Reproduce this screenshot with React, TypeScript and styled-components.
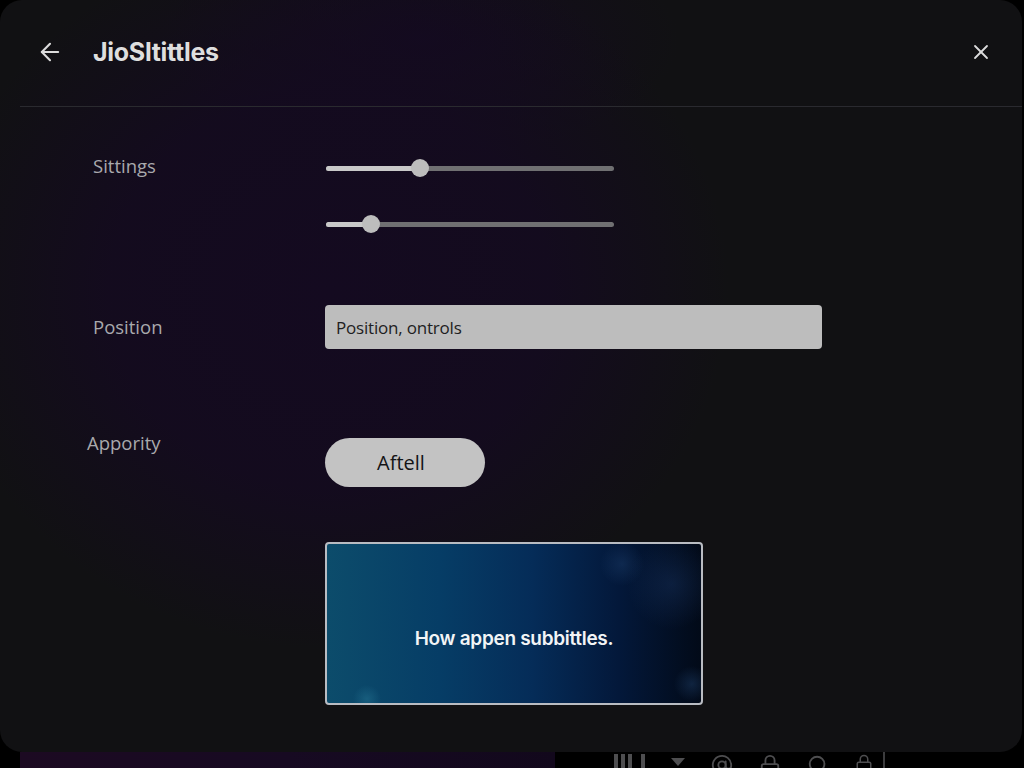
import { FC } from 'react';
import styled, { createGlobalStyle } from 'styled-components';
import { ArrowLeft, X, Search, AtSign, Lock } from 'lucide-react';

const GlobalStyle = createGlobalStyle`
  html, body {
    margin: 0;
    padding: 0;
    background: #000;
  }

  body {
    font-family: 'Open Sans', 'Noto Sans', sans-serif;
    -webkit-font-smoothing: antialiased;
  }
`;

const Screen = styled.div`
  width: 1024px;
  height: 768px;
  display: flex;
  flex-direction: column;
  overflow: hidden;
  background: #000;
`;

const Panel = styled.div`
  height: 752px;
  width: 1022px;
  flex-shrink: 0;
  display: flex;
  flex-direction: column;
  border-radius: 22px;
  background:
    radial-gradient(ellipse 400px 360px at 330px 290px, rgba(20, 10, 32, 1) 0%, rgba(20, 10, 32, 0.85) 55%, rgba(20, 10, 32, 0) 100%),
    radial-gradient(ellipse 260px 120px at 420px 40px, rgba(20, 10, 32, 0.9), rgba(20, 10, 32, 0)),
    #111113;
`;

const Header = styled.header`
  box-sizing: border-box;
  height: 107px;
  display: flex;
  align-items: center;
  margin-left: 20px;
  padding: 0 29px 2px 16px;
  border-bottom: 1px solid #2a2a2f;
`;

const IconButton = styled.button`
  display: flex;
  align-items: center;
  justify-content: center;
  padding: 0;
  border: none;
  background: none;
  color: #dcdcdc;
  cursor: pointer;
`;

const Title = styled.h1`
  margin: 0 0 0 29px;
  flex: 1;
  font-family: 'Inter', 'Open Sans', sans-serif;
  font-size: 25px;
  font-weight: 700;
  letter-spacing: -0.3px;
  color: #dedede;
`;

const Body = styled.div`
  display: grid;
  grid-template-columns: 232px 1fr;
  padding: 52px 0 0 93px;
`;

type TLabel = {
  shift?: number;
};
const Label = styled.div<TLabel>`
  font-size: 18.5px;
  color: #a9a9ad;
  margin-left: ${({ shift }) => shift ?? 0}px;
`;

type TCell = {
  gap?: number;
  bottom?: number;
};
const Cell = styled.div<TCell>`
  display: flex;
  flex-direction: column;
  align-items: flex-start;
  gap: ${({ gap }) => gap ?? 0}px;
  margin-bottom: ${({ bottom }) => bottom ?? 0}px;
`;

const SliderRow = styled.div`
  position: relative;
  width: 288px;
  height: 18px;
  margin-left: 1px;
  display: flex;
  align-items: center;
`;

const Track = styled.div`
  width: 100%;
  height: 5px;
  border-radius: 3px;
  background: #707072;
  overflow: hidden;
`;

const Fill = styled.div`
  height: 100%;
  background: #c9c9c9;
`;

const Thumb = styled.div`
  position: absolute;
  top: 0;
  width: 18px;
  height: 18px;
  margin-left: -9px;
  border-radius: 50%;
  background: #bdbdbd;
`;

const TextField = styled.div`
  box-sizing: border-box;
  width: 497px;
  height: 44px;
  display: flex;
  align-items: center;
  padding: 0 11px;
  border-radius: 4px;
  background: #bdbdbd;
  font-size: 17px;
  color: #1e1e22;
  letter-spacing: -0.2px;
`;

const PillButton = styled.button`
  width: 160px;
  height: 49px;
  border: none;
  border-radius: 25px;
  background: #c3c3c3;
  font-family: 'Open Sans', sans-serif;
  font-size: 20px;
  color: #141416;
  padding: 0 8px 0 0;
  cursor: pointer;
`;

const Preview = styled.div`
  box-sizing: border-box;
  width: 378px;
  height: 163px;
  display: flex;
  align-items: center;
  justify-content: center;
  padding-top: 30px;
  border: 2px solid #b9bcc2;
  border-radius: 4px;
  background:
    radial-gradient(circle 45px at 345px 40px, rgba(30, 60, 110, 0.35), rgba(30, 60, 110, 0) 100%),
    radial-gradient(circle 22px at 295px 20px, rgba(40, 80, 130, 0.3), rgba(40, 80, 130, 0)),
    radial-gradient(circle 18px at 365px 140px, rgba(40, 80, 130, 0.35), rgba(40, 80, 130, 0)),
    radial-gradient(circle 14px at 40px 155px, rgba(40, 120, 150, 0.45), rgba(40, 120, 150, 0)),
    linear-gradient(90deg, #0c4c6b 0%, #063d66 30%, #052c58 55%, #03183a 78%, #020a18 100%);
`;

const Caption = styled.span`
  font-family: 'Inter', 'Open Sans', sans-serif;
  font-size: 19px;
  font-weight: 600;
  letter-spacing: -0.3px;
  color: #f2f4f6;
`;

const Taskbar = styled.div`
  flex: 1;
  display: flex;
  align-items: flex-start;
`;

const TaskbarTile = styled.div`
  width: 535px;
  height: 100%;
  margin-left: 20px;
  background: linear-gradient(90deg, #1c0a22 0%, #170a22 50%, #12081c 100%);
`;

const TrayIcons = styled.div`
  display: flex;
  align-items: flex-start;
  gap: 26px;
  margin-left: 59px;
  margin-top: 2px;
  color: #4e4e50;
`;

const Bars = styled.div`
  display: flex;
  gap: 3px;
  align-items: flex-end;
  height: 14px;

  & > span {
    width: 4px;
    height: 14px;
    background: #4e4e50;
  }
`;

const Triangle = styled.div`
  width: 0;
  height: 0;
  margin-top: 4px;
  border-left: 7px solid transparent;
  border-right: 7px solid transparent;
  border-top: 8px solid #4e4e50;
`;

const Divider = styled.div`
  width: 2px;
  height: 16px;
  margin-left: 10px;
  background: #3c3c3e;
`;

type SliderProps = {
  value: number;
};

const Slider: FC<SliderProps> = ({ value }) => (
  <SliderRow>
    <Track>
      <Fill style={{ width: `${value}%` }} />
    </Track>
    <Thumb style={{ left: `${value}%` }} />
  </SliderRow>
);

const App: FC = () => (
  <>
    <GlobalStyle />
    <Screen>
      <Panel>
        <Header>
          <IconButton aria-label="Back">
            <ArrowLeft size={28} strokeWidth={1.8} />
          </IconButton>
          <Title>JioSltittles</Title>
          <IconButton aria-label="Close">
            <X size={24} strokeWidth={1.8} />
          </IconButton>
        </Header>

        <Body>
          <Label style={{ marginTop: -6 }}>Sittings</Label>
          <Cell gap={38} bottom={72}>
            <Slider value={32.5} />
            <Slider value={15.5} />
          </Cell>

          <Label style={{ marginTop: 9 }}>Position</Label>
          <Cell bottom={89}>
            <TextField>Position, ontrols</TextField>
          </Cell>

          <Label shift={-6} style={{ marginTop: -8 }}>
            Appority
          </Label>
          <Cell bottom={55}>
            <PillButton>Aftell</PillButton>
          </Cell>

          <div />
          <Cell>
            <Preview>
              <Caption>How appen subbittles.</Caption>
            </Preview>
          </Cell>
        </Body>
      </Panel>

      <Taskbar>
        <TaskbarTile />
        <TrayIcons>
          <Bars>
            <span />
            <span />
            <span />
            <span style={{ marginLeft: 6 }} />
          </Bars>
          <Triangle />
          <AtSign size={22} strokeWidth={2} />
          <Lock size={22} strokeWidth={2} />
          <Search size={22} strokeWidth={2} />
          <Lock size={18} strokeWidth={2} />
        </TrayIcons>
        <Divider />
      </Taskbar>
    </Screen>
  </>
);

export default App;
